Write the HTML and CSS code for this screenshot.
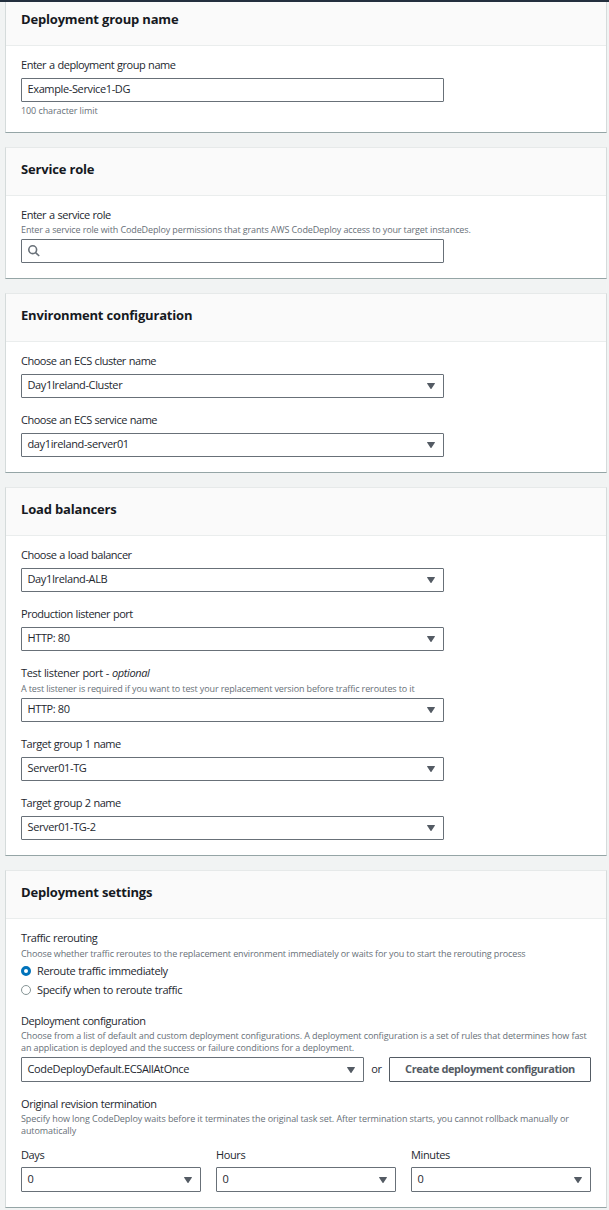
FILE: index.html
```html
<!DOCTYPE html>
<html lang="en">
<head>
<meta charset="utf-8">
<title>Create deployment group</title>
<link rel="stylesheet" href="styles.css">
</head>
<body>
<svg class="defs" width="0" height="0" aria-hidden="true">
  <symbol id="caret" viewBox="0 0 8 6"><path d="M.4 0h7.2q.6.1.2.7L4.5 5.7q-.5.5-1 0L.2.7Q-.2.1.4 0z"/></symbol>
</svg>
<div class="topbar"></div>
<main class="page">
  <section class="card card-first">
    <h2 class="card-title">Deployment group name</h2>
    <div class="card-body">
      <div class="field">
        <div class="label">Enter a deployment group name</div>
        <div class="control">Example-Service1-DG</div>
        <div class="constraint">100 character limit</div>
      </div>
    </div>
  </section>

  <section class="card">
    <h2 class="card-title">Service role</h2>
    <div class="card-body">
      <div class="field field-search">
        <div class="label">Enter a service role</div>
        <div class="hint">Enter a service role with CodeDeploy permissions that grants AWS CodeDeploy access to your target instances.</div>
        <div class="control"><svg class="search" viewBox="0 0 12 12"><circle cx="4.7" cy="4.7" r="3.9"/><path d="M7.6 7.6l3.6 3.4"/></svg></div>
      </div>
    </div>
  </section>

  <section class="card">
    <h2 class="card-title">Environment configuration</h2>
    <div class="card-body">
      <div class="field">
        <div class="label">Choose an ECS cluster name</div>
        <div class="control">Day1Ireland-Cluster<svg class="caret"><use href="#caret"/></svg></div>
      </div>
      <div class="field">
        <div class="label">Choose an ECS service name</div>
        <div class="control">day1ireland-server01<svg class="caret"><use href="#caret"/></svg></div>
      </div>
    </div>
  </section>

  <section class="card">
    <h2 class="card-title">Load balancers</h2>
    <div class="card-body">
      <div class="field">
        <div class="label">Choose a load balancer</div>
        <div class="control">Day1Ireland-ALB<svg class="caret"><use href="#caret"/></svg></div>
      </div>
      <div class="field">
        <div class="label">Production listener port</div>
        <div class="control">HTTP: 80<svg class="caret"><use href="#caret"/></svg></div>
      </div>
      <div class="field">
        <div class="label label-optional">Test listener port - <i>optional</i></div>
        <div class="hint">A test listener is required if you want to test your replacement version before traffic reroutes to it</div>
        <div class="control">HTTP: 80<svg class="caret"><use href="#caret"/></svg></div>
      </div>
      <div class="field">
        <div class="label">Target group 1 name</div>
        <div class="control">Server01-TG<svg class="caret"><use href="#caret"/></svg></div>
      </div>
      <div class="field">
        <div class="label">Target group 2 name</div>
        <div class="control">Server01-TG-2<svg class="caret"><use href="#caret"/></svg></div>
      </div>
    </div>
  </section>

  <section class="card">
    <h2 class="card-title">Deployment settings</h2>
    <div class="card-body settings">
      <div class="field">
        <div class="label">Traffic rerouting</div>
        <div class="hint">Choose whether traffic reroutes to the replacement environment immediately or waits for you to start the rerouting process</div>
        <div class="options">
          <div class="option"><span class="radio radio-on"></span>Reroute traffic immediately</div>
          <div class="option"><span class="radio"></span>Specify when to reroute traffic</div>
        </div>
      </div>
      <div class="field">
        <div class="label">Deployment configuration</div>
        <div class="hint hint-config">Choose from a list of default and custom deployment configurations. A deployment configuration is a set of rules that determines how fast<br>an application is deployed and the success or failure conditions for a deployment.</div>
        <div class="config-row">
          <div class="control">CodeDeployDefault.ECSAllAtOnce<svg class="caret"><use href="#caret"/></svg></div>
          <span class="or">or</span>
          <div class="button">Create deployment configuration</div>
        </div>
      </div>
      <div class="field">
        <div class="label">Original revision termination</div>
        <div class="hint hint-termination">Specify how long CodeDeploy waits before it terminates the original task set. After termination starts, you cannot rollback manually or<br>automatically</div>
        <div class="time-row">
          <div>
            <div class="label">Days</div>
            <div class="control">0<svg class="caret"><use href="#caret"/></svg></div>
          </div>
          <div>
            <div class="label">Hours</div>
            <div class="control">0<svg class="caret"><use href="#caret"/></svg></div>
          </div>
          <div>
            <div class="label">Minutes</div>
            <div class="control">0<svg class="caret"><use href="#caret"/></svg></div>
          </div>
        </div>
      </div>
    </div>
  </section>
</main>
</body>
</html>
```

FILE: styles.css
```css
* { box-sizing: border-box; }
body {
  margin: 0;
  background: #f1f3f3;
  color: #16191f;
  font: 11px/16px "Open Sans", "Noto Sans", sans-serif;
  letter-spacing: -0.37px;
}
.defs { display: none; }
.topbar { height: 2px; background: #232f3e; }
.page {
  display: flex;
  flex-direction: column;
  gap: 14px;
  padding: 0 2px 2px 5px;
}
.card {
  background: #fff;
  border: 1px solid #d5dbdb;
  border-top-color: #e6e9e9;
  border-bottom-color: #95a5a6;
}
.card-first { border-top: 0; }
.card-title {
  height: 48px;
  margin: 0;
  padding: 11px 15px 0;
  background: #fafafa;
  border-bottom: 1px solid #eaeded;
  font-size: 13px;
  font-weight: 700;
  line-height: 20px;
  letter-spacing: -0.18px;
}
.card-first .card-title { height: 44px; padding-top: 7px; }
.card-body {
  display: flex;
  flex-direction: column;
  gap: 14px;
  padding: 11px 15px 15px;
  color: #24282f;
}
.label {
  height: 16px;
  margin-bottom: 5px;
  letter-spacing: -0.48px;
  word-spacing: 0.5px;
  white-space: nowrap;
}
.label-optional { letter-spacing: -0.36px; }
.hint {
  margin: -3px 0 3px;
  color: #687078;
  font-size: 9px;
  line-height: 12px;
  letter-spacing: -0.125px;
  white-space: nowrap;
}
.field-search .hint { margin-top: -4px; }
.hint-config { margin-top: -4px; letter-spacing: -0.105px; }
.hint-termination { margin-top: -4px; letter-spacing: -0.09px; }
.constraint {
  margin-top: 2px;
  color: #687078;
  font-size: 9px;
  line-height: 13px;
  letter-spacing: -0.09px;
}
.control {
  display: flex;
  align-items: center;
  justify-content: space-between;
  width: 423px;
  height: 24px;
  padding: 0 8px 2px 5.5px;
  border: 1px solid #687078;
  border-radius: 1px;
  background: #fff;
}
.caret { width: 8px; height: 6px; margin-top: 2px; fill: #545b64; }
.search {
  width: 12px;
  height: 12px;
  margin-top: 2px;
  fill: none;
  stroke: #687078;
  stroke-width: 1.6;
}
.options { margin-top: -2px; }
.option {
  display: flex;
  align-items: center;
  gap: 6px;
  height: 19px;
  word-spacing: 0.4px;
}
.radio {
  width: 10px;
  height: 10px;
  margin-top: 1px;
  border: 1px solid #879596;
  border-radius: 50%;
}
.radio-on { border: 3px solid #0073bb; }
.settings .control { height: 25px; }
.config-row { display: flex; align-items: center; }
.config-row .control { width: 343px; letter-spacing: -0.34px; }
.or { width: 25px; margin-top: -2px; text-align: center; }
.button {
  width: 202px;
  height: 25px;
  border: 1px solid #545b64;
  border-radius: 1px;
  color: #545b64;
  font-weight: 700;
  line-height: 21px;
  letter-spacing: -0.42px;
  text-align: center;
}
.settings > .field > .label { letter-spacing: -0.42px; }
.time-row {
  display: grid;
  grid-template-columns: repeat(3, 180px);
  gap: 15px;
  padding-top: 7px;
}
.time-row .label { margin-bottom: 4px; letter-spacing: -0.37px; }
.time-row .control { width: 180px; }
```
